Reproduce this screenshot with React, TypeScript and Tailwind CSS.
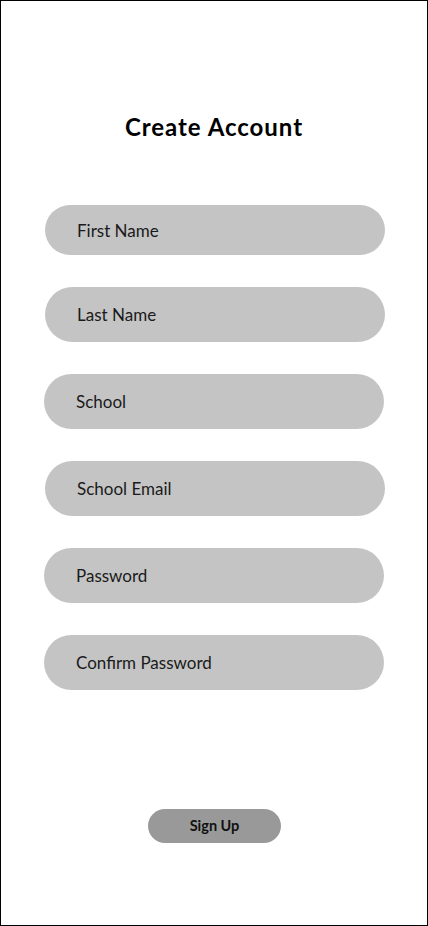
const FIELDS = [
  { label: "First Name", box: "h-[50px] ml-[44px]" },
  { label: "Last Name", box: "h-[55px] ml-[44px] mt-[32px]" },
  { label: "School", box: "h-[55px] ml-[43px] mt-[32px]" },
  { label: "School Email", box: "h-[55px] ml-[44px] mt-[32px]" },
  { label: "Password", box: "h-[55px] ml-[43px] mt-[32px]" },
  { label: "Confirm Password", box: "h-[55px] ml-[43px] mt-[32px]" },
];

export default function App() {
  return (
    <div
      className="w-[428px] h-[926px] bg-white border border-black flex flex-col"
      style={{ fontFamily: "Lato, 'Open Sans', sans-serif" }}
    >
      <h1 className="mt-[111px] text-center text-[24px] leading-[30px] tracking-[0.04em] font-bold text-black">
        Create Account
      </h1>

      <form className="mt-[63px] flex flex-col">
        {FIELDS.map((f) => (
          <div
            key={f.label}
            className={`w-[340px] pl-[32px] pt-px rounded-full bg-[#c4c4c4] flex items-center ${f.box}`}
          >
            <span className="text-[17px] text-[#1a1a1a]">{f.label}</span>
          </div>
        ))}
      </form>

      <button
        type="button"
        className="mt-[119px] ml-[147px] w-[133px] h-[34px] rounded-full bg-[#999999] text-[14.5px] font-bold text-[#111111]"
      >
        Sign Up
      </button>
    </div>
  );
}
